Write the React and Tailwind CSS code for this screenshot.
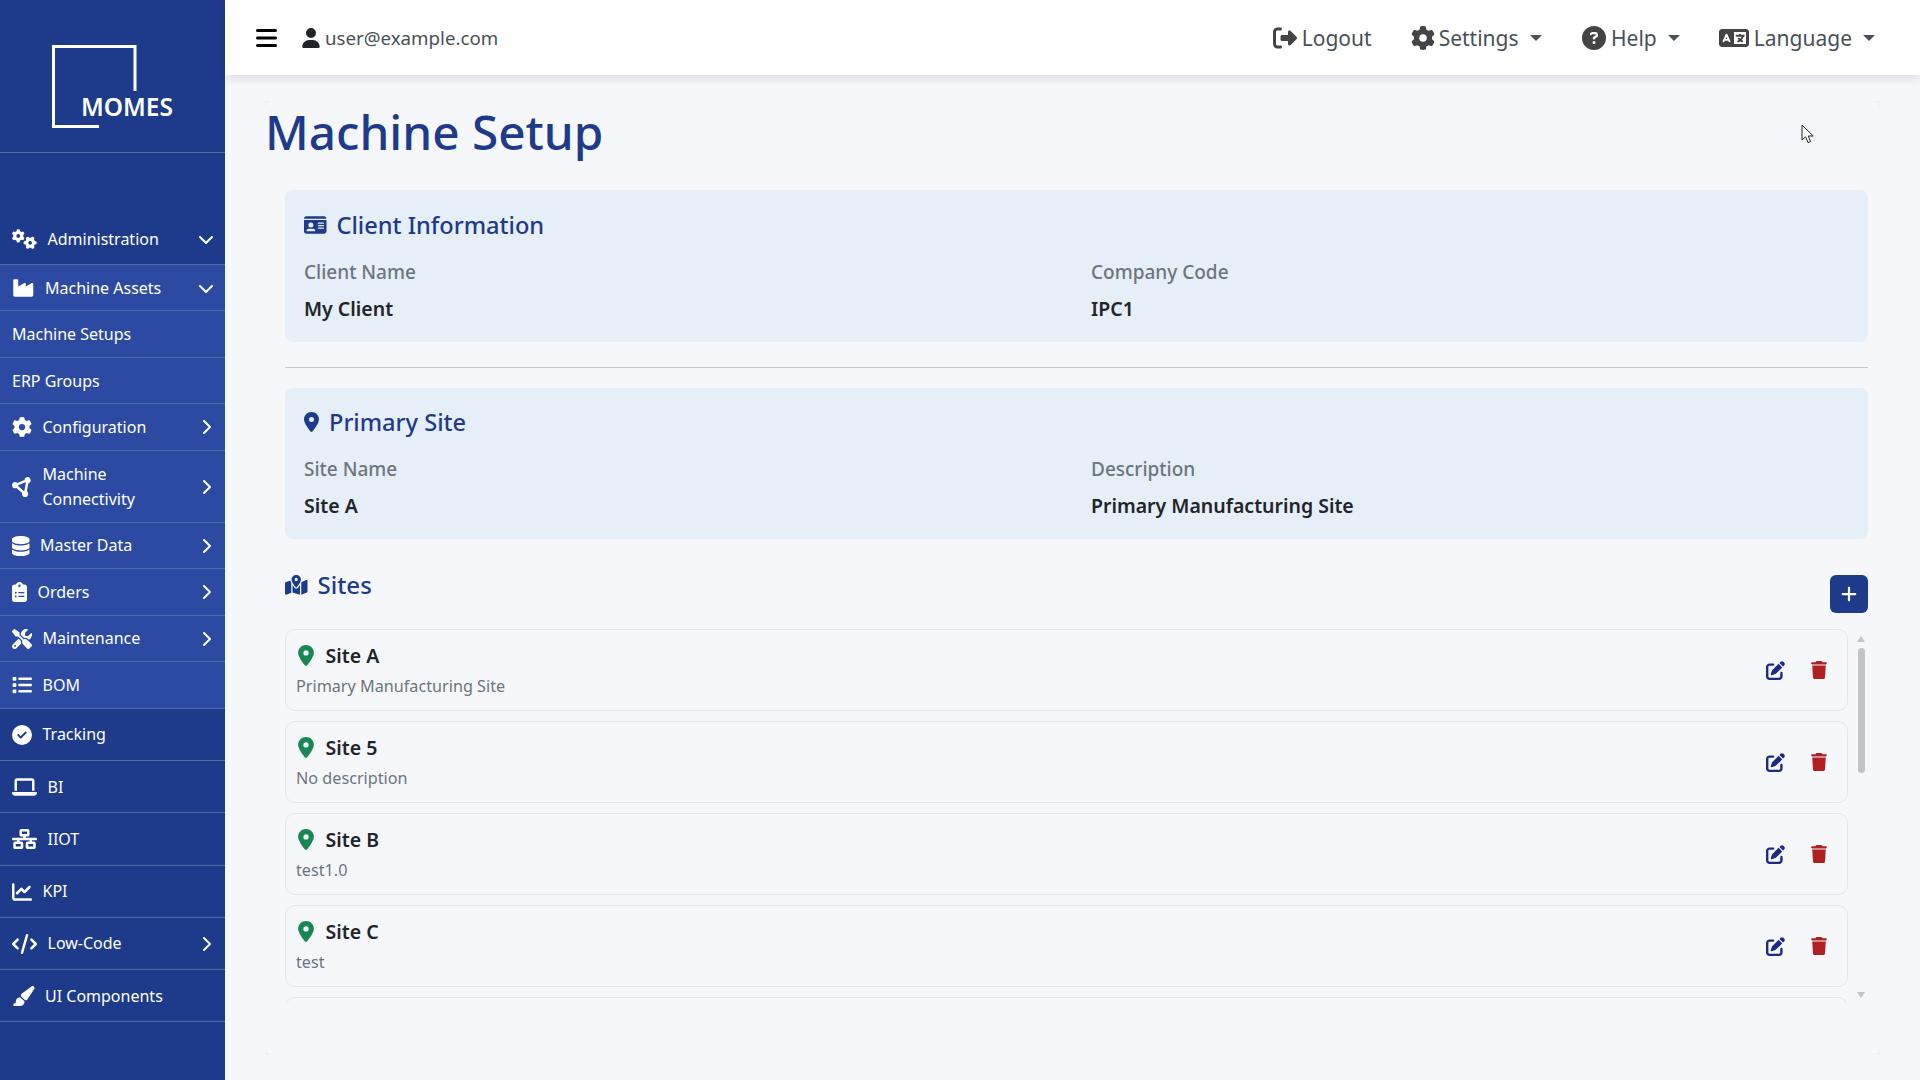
import { FaGears, FaIndustry, FaGear, FaCircleNodes, FaDatabase, FaClipboardList, FaScrewdriverWrench, FaList, FaCircleCheck, FaLaptop, FaNetworkWired, FaChartLine, FaCode, FaPaintbrush, FaChevronDown, FaChevronRight, FaBars, FaUser, FaRightFromBracket, FaCircleQuestion, FaLanguage, FaIdCard, FaLocationDot, FaMapLocationDot, FaPenToSquare, FaTrash, FaPlus } from 'react-icons/fa6';

const navItems = [
  { name: 'Administration', icon: FaGears, iconSize: 'w-[25px] h-[20px]', arrow: 'down', row: 'h-[51px]' },
  { name: 'Machine Assets', icon: FaIndustry, iconSize: 'w-[22.5px] h-[20px]', arrow: 'down', row: 'h-[46px] bg-[#2d4aa2]', nudge: true },
  { name: 'Machine Setups', row: 'h-[47px] bg-[#2d4aa2]' },
  { name: 'ERP Groups', row: 'h-[46px] bg-[#2d4aa2]', nudge: true },
  { name: 'Configuration', icon: FaGear, iconSize: 'w-[20px] h-[20px]', arrow: 'right', row: 'h-[47px] bg-[#2d4aa2]' },
  { name: 'Machine Connectivity', icon: FaCircleNodes, iconSize: 'w-[20px] h-[20px]', arrow: 'right', row: 'h-[72px] bg-[#2d4aa2]', wrap: true },
  { name: 'Master Data', icon: FaDatabase, iconSize: 'w-[17.5px] h-[20px]', arrow: 'right', row: 'h-[46px] bg-[#2d4aa2]' },
  { name: 'Orders', icon: FaClipboardList, iconSize: 'w-[15px] h-[20px]', arrow: 'right', row: 'h-[47px] bg-[#2d4aa2]' },
  { name: 'Maintenance', icon: FaScrewdriverWrench, iconSize: 'w-[20px] h-[20px]', arrow: 'right', row: 'h-[46px] bg-[#2d4aa2]' },
  { name: 'BOM', icon: FaList, iconSize: 'w-[20px] h-[20px]', row: 'h-[47px] bg-[#2d4aa2]' },
  { name: 'Tracking', icon: FaCircleCheck, iconSize: 'w-[20px] h-[20px]', row: 'h-[52px]' },
  { name: 'BI', icon: FaLaptop, iconSize: 'w-[25px] h-[20px]', row: 'h-[52px]', nudge: true },
  { name: 'IIOT', icon: FaNetworkWired, iconSize: 'w-[25px] h-[20px]', row: 'h-[53px]' },
  { name: 'KPI', icon: FaChartLine, iconSize: 'w-[20px] h-[20px]', row: 'h-[52px]' },
  { name: 'Low-Code', icon: FaCode, iconSize: 'w-[25px] h-[20px]', arrow: 'right', row: 'h-[52px]' },
  { name: 'UI Components', icon: FaPaintbrush, iconSize: 'w-[22.5px] h-[20px]', row: 'h-[52px]', nudge: true },
];

const sites = [
  { name: 'Site A', desc: 'Primary Manufacturing Site' },
  { name: 'Site 5', desc: 'No description' },
  { name: 'Site B', desc: 'test1.0' },
  { name: 'Site C', desc: 'test' },
];

const Sidebar = () => (
  <aside className="w-[225px] shrink-0 h-full bg-[#1e3a8a] text-white flex flex-col">
    <div className="h-[153px] shrink-0 border-b border-[#4a6da7] relative">
      <svg className="absolute left-[50px] top-[43px]" width="90" height="90" viewBox="0 0 90 90" fill="none" stroke="#fff" strokeWidth="3">
        <path d="M85 48V3.5H3.5V83.5H49" />
      </svg>
      <span className="absolute left-[81px] top-[89px] text-[24.5px] leading-[36px] font-semibold">MOMES</span>
    </div>
    <nav className="mt-[61px]">
      {navItems.map((item) => (
        <div key={item.name} className={`flex items-center pl-3 border-b border-[#4a6da7] text-[16px] leading-[25px] ${item.row}`}>
          {item.icon && <item.icon className={`shrink-0 mr-[10.5px] ${item.iconSize}`} />}
          <span className={`${item.wrap ? 'w-[110px]' : ''} ${item.nudge ? 'pt-[2px]' : ''}`}>{item.name}</span>
          {item.arrow === 'down' && <FaChevronDown className="ml-auto mr-[11px] w-[16px] h-[16px]" />}
          {item.arrow === 'right' && <FaChevronRight className="ml-auto mr-[14px] w-[10px] h-[16px]" />}
        </div>
      ))}
    </nav>
  </aside>
);

const Caret = () => (
  <span className="ml-[11px] w-0 h-0 border-x-[6px] border-x-transparent border-t-[6px] border-t-[#495057]" />
);

const Topbar = () => (
  <header className="h-[75px] shrink-0 bg-white flex items-center shadow-[0_4px_10px_rgba(0,0,0,0.1)] relative z-10 pl-[31px] pr-[45px]">
    <FaBars className="w-[21px] h-[24px] text-black" />
    <FaUser className="w-[18px] h-[20px] text-[#212529] ml-[25px]" />
    <span className="ml-[5px] mt-[2px] text-[18.7px] text-[#495057]">user@example.com</span>
    <div className="ml-auto flex items-center text-[21px] text-[#495057]">
      <FaRightFromBracket className="w-[24px] h-[24px] text-[#444]" />
      <span className="ml-[5px] mt-[2px]">Logout</span>
      <FaGear className="ml-[39px] w-[24px] h-[24px] text-[#444]" />
      <span className="ml-[4px] mt-[2px]">Settings</span>
      <Caret />
      <FaCircleQuestion className="ml-[40.5px] w-[24px] h-[24px] text-[#444]" />
      <span className="ml-[5px] mt-[2px]">Help</span>
      <Caret />
      <FaLanguage className="ml-[39px] w-[30px] h-[24px] text-[#444]" />
      <span className="ml-[5px] mt-[2px]">Language</span>
      <Caret />
    </div>
  </header>
);

const InfoCard = ({ icon: Icon, iconSize, title, rows, className }) => (
  <section className={`bg-[#e6eef8] rounded-lg pl-[19px] ${className}`}>
    <h2 className="flex items-center text-[23.6px] leading-[36px] text-[#1e3a8a] font-medium">
      <Icon className={`${iconSize} mr-[10px]`} />
      {title}
    </h2>
    <div className="grid grid-cols-[787px_1fr] mt-[15px]">
      {rows.map((col) => (
        <div key={col.label}>
          <div className="text-[19px] leading-[28px] text-[#6c757d] font-medium">{col.label}</div>
          <div className="mt-[9px] text-[19.5px] leading-[28px] text-[#212529] font-semibold">{col.value}</div>
        </div>
      ))}
    </div>
  </section>
);

const SiteRow = ({ site }) => (
  <div className="h-[82px] shrink-0 border-[1.5px] border-[#e3e5eb] rounded-[10px] flex items-center pl-[10px] pr-[20px]">
    <div className="flex-1">
      <div className="flex items-center -mt-[1px] text-[19.5px] leading-[28px] font-semibold text-[#212529]">
        <FaLocationDot className="w-[16px] h-[21px] text-[#198754] ml-[1.5px] mr-[12px]" />
        {site.name}
      </div>
      <div className="mt-[4px] text-[16.2px] leading-[24px] text-[#6c757d]">{site.desc}</div>
    </div>
    <FaPenToSquare className="w-[19px] h-[19px] text-[#1e2a80]" />
    <FaTrash className="ml-[26px] w-[16px] h-[18px] text-[#b02020]" />
  </div>
);

const Scrollbar = () => (
  <div className="w-[20px] shrink-0 flex flex-col items-center pl-[6px]">
    <span className="mt-[7px] w-0 h-0 border-x-[4px] border-x-transparent border-b-[6px] border-b-[#c4c4c4]" />
    <span className="mt-[6px] w-[7px] h-[125px] rounded-full bg-[#c4c4c4]" />
    <span className="mt-[219px] w-0 h-0 border-x-[4px] border-x-transparent border-t-[6px] border-t-[#c4c4c4]" />
  </div>
);

export default function App() {
  return (
    <div className="w-[1920px] h-[1080px] flex overflow-hidden bg-[#f5f7fb] font-['Noto_Sans',sans-serif]">
      <Sidebar />
      <div className="flex-1 min-w-0 flex flex-col">
        <Topbar />
        <main className="flex-1 min-h-0 relative">
          {/* faint square backing behind the page panel, only its corners show */}
          <div className="absolute left-[40px] top-[26px] w-[1615px] h-[954px] bg-[#eff1f6]">
            <div className="h-full rounded-lg bg-[#f5f7fb]" />
          </div>
          <svg className="absolute z-10 left-[1576px] top-[49px]" width="14" height="21" viewBox="0 0 14 21" fill="#fff" stroke="#222" strokeWidth="1">
            <path d="M1 1V16L4.6 12.8L7 18.6L9.6 17.5L7.2 12H12.2Z" />
          </svg>
          <div className="relative">
            <h1 className="ml-[40px] pt-[24px] text-[47.7px] leading-[66px] font-medium text-[#1e3a8a]">Machine Setup</h1>
            <div className="ml-[60px] mr-[52px] mt-[25px]">
              <InfoCard
                icon={FaIdCard}
                iconSize="w-[22.5px] h-[20px]"
                title="Client Information"
                className="h-[152px] pt-[17px]"
                rows={[{ label: 'Client Name', value: 'My Client' }, { label: 'Company Code', value: 'IPC1' }]}
              />
              <hr className="mt-[25px] mb-[20px] border-[#c5c8cd]" />
              <InfoCard
                icon={FaLocationDot}
                iconSize="w-[15px] h-[20px]"
                title="Primary Site"
                className="h-[151px] pt-[16px]"
                rows={[{ label: 'Site Name', value: 'Site A' }, { label: 'Description', value: 'Primary Manufacturing Site' }]}
              />
              <div className="h-[38px] mt-[36px] flex items-start">
                <h2 className="flex items-center text-[24px] leading-[18px] text-[#1e3a8a] font-medium">
                  <FaMapLocationDot className="w-[22.5px] h-[20px] mr-[10px]" />
                  Sites
                </h2>
                <button className="ml-auto w-[38px] h-[38px] rounded-md bg-[#1e3a8a] text-white flex items-center justify-center">
                  <FaPlus className="w-[16px] h-[18px]" />
                </button>
              </div>
              <div className="mt-[16px] h-[374px] flex overflow-hidden">
                <div className="flex-1 min-w-0 flex flex-col gap-[10px] overflow-hidden">
                  {sites.map((site) => <SiteRow key={site.name} site={site} />)}
                  <div className="h-[82px] shrink-0 border-[1.5px] border-[#e3e5eb] rounded-[10px]" />
                </div>
                <Scrollbar />
              </div>
            </div>
          </div>
        </main>
      </div>
    </div>
  );
}
